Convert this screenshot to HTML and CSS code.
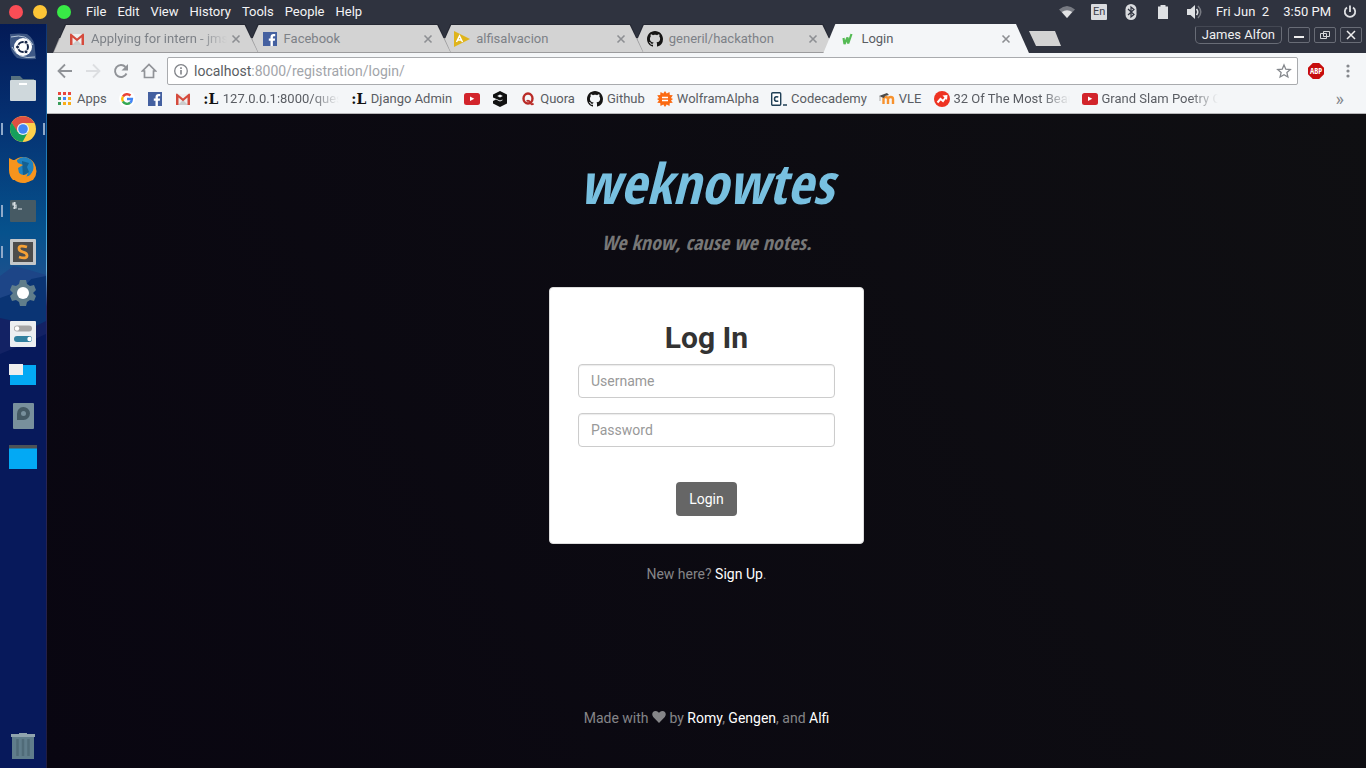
FILE: index.html
```html
<!DOCTYPE html>
<html lang="en">
<head>
<meta charset="utf-8">
<title>Login</title>
<link rel="stylesheet" href="styles.css">
</head>
<body>
<svg class="defs" width="0" height="0" aria-hidden="true">
  <symbol id="gmail" viewBox="0 0 16 16"><path fill="#eee" d="M1 3h14v11H1z"/><path fill="#ccc" d="M3 14l5-5 5 5z"/><path fill="#d54b3d" d="M1 14V3.500Q1 2.500 2 2.500L8 7.500l6-5q1 0 1 1V14h-2.500V6.500L8 10.300 3.500 6.500V14z"/></symbol>
  <symbol id="facebook" viewBox="0 0 16 16"><path fill="#4460a0" d="M1 1h14v14H1z"/><path fill="#fff" d="M8.500 15V9.700H6.800V7.500h1.700V6c0-2 1.200-3 3-3h1.700v2.200h-1.100c-.9 0-1.200.4-1.200 1.100v1.200h2.200l-.3 2.200h-1.900V15z"/></symbol>
  <symbol id="github" viewBox="0 0 16 16"><path fill="#161514" d="M8 0C3.580 0 0 3.580 0 8c0 3.540 2.290 6.530 5.470 7.590.4.070.55-.17.55-.38 0-.19-.01-.82-.01-1.490-2.010.37-2.530-.49-2.690-.94-.09-.23-.48-.94-.82-1.130-.28-.15-.68-.52-.01-.53.63-.01 1.080.58 1.230.82.72 1.210 1.870.87 2.330.66.070-.52.28-.87.51-1.070-1.780-.2-3.640-.89-3.640-3.950 0-.87.31-1.590.82-2.150-.08-.2-.36-1.020.08-2.120 0 0 .67-.21 2.200.82.64-.18 1.320-.27 2-.27s1.360.09 2 .27c1.530-1.040 2.200-.82 2.200-.82.44 1.100.16 1.920.08 2.120.51.56.82 1.270.82 2.150 0 3.070-1.870 3.750-3.650 3.950.29.25.54.73.54 1.480 0 1.070-.01 1.930-.01 2.200 0 .21.15.46.55.38A8 8 0 0016 8c0-4.420-3.580-8-8-8z"/></symbol>
  <symbol id="youtube" viewBox="0 0 16 16"><rect y="2" width="16" height="12" rx="2.500" fill="#d2242b"/><path fill="#fff" d="M6 5.500v4.600L10.300 7.800z"/></symbol>
  <symbol id="close" viewBox="0 0 10 10"><path d="M1.500 1.500l7 7M8.500 1.500l-7 7" stroke="#8d8f93" stroke-width="1.600" fill="none"/></symbol>
</svg>

<header class="menubar">
  <div class="lights">
    <button class="light red" aria-label="Close window"></button>
    <button class="light amber" aria-label="Minimise window"></button>
    <button class="light green" aria-label="Maximise window"></button>
  </div>
  <nav class="menus">
    <button>File</button><button>Edit</button><button>View</button><button>History</button><button>Tools</button><button>People</button><button>Help</button>
  </nav>
  <div class="status">
    <div class="indicators">
      <svg width="16" height="16" viewBox="0 0 16 16"><path fill="#777a82" d="M0 5.500Q8-1.500 16 5.500L8 14z"/><path fill="#e2e3e5" d="M2.800 8Q8 4.500 13.200 8L8 14z"/></svg>
      <span class="lang">En</span>
      <svg width="16" height="16" viewBox="0 0 16 16"><rect x="2.500" width="11" height="16" rx="5.500" fill="#dadcdf"/><path d="M5 5l6 5.500-3 2.500V3l3 2.500L5 11" fill="none" stroke="#2f333f" stroke-width="1.200"/></svg>
      <svg width="16" height="16" viewBox="0 0 16 16"><path fill="#dfe1e4" d="M3 2.500h2.500V1h5v1.500H13V15H3z"/></svg>
      <svg width="16" height="16" viewBox="0 0 16 16"><path fill="#dfe1e4" d="M0 5h3.500L8 1v14l-4.500-4H0z"/><path d="M9.500 5q2.500 3 0 6" fill="none" stroke="#dfe1e4" stroke-width="1.600"/><path d="M11 2q5.500 6 0 12" fill="none" stroke="#777a82" stroke-width="1.500"/></svg>
    </div>
    <span class="date">Fri Jun&nbsp; 2</span>
    <time>3:50 PM</time>
    <button class="power" aria-label="Power"><svg width="16" height="16" viewBox="0 0 16 16"><path d="M5 3.500a5.200 5.200 0 1 0 6 0M8 1.500V8" fill="none" stroke="#dfe1e4" stroke-width="1.800"/></svg></button>
  </div>
</header>

<div class="desktop">
  <nav class="launcher" aria-label="Launcher">
    <svg class="wallpaper" viewBox="0 0 47 744" preserveAspectRatio="none" aria-hidden="true">
      <defs><linearGradient id="sky" x2="0" y2="1"><stop stop-color="#031a56"/><stop offset=".12" stop-color="#052f70"/><stop offset=".28" stop-color="#06528d"/><stop offset=".36" stop-color="#23508d"/></linearGradient></defs>
      <path fill="url(#sky)" d="M0 0h47v744H0z"/>
      <path fill="#1d4587" d="M0 252l14-10 16 4 17 5v60H0z"/>
      <path fill="#0a3474" d="M0 274l20-7 12-12 15-3v60H0z"/>
      <path fill="#132264" d="M0 294l14 3 12 10 21-10v60H0z"/>
      <path fill="#07195b" d="M0 330l20-8 27-12v434H0z"/>
    </svg>
    <button class="app" aria-label="Search"><svg viewBox="0 0 28 28"><path fill="#7890ad" opacity=".5" d="M1 1q10-1 17 0 8 5 8 16l1 9q-12 1-19-1Q1 19 1 10z"/><path d="M2 4q16-4 22 8M26 24Q9 27 3 14" stroke="#b9c8d8" fill="none"/><circle cx="14" cy="14" r="9" fill="#fff"/><circle cx="14" cy="14" r="5" fill="none" stroke="#182748" stroke-width="2"/><g fill="#182748" stroke="#fff"><circle cx="8.500" cy="14" r="2"/><circle cx="17" cy="9.200" r="2"/><circle cx="17" cy="18.800" r="2"/></g></svg></button>
    <button class="app" aria-label="Files"><svg viewBox="0 0 28 28"><path fill="#57717f" d="M2 2h9l3 3h11v7H2z"/><rect x="1" y="6" width="26" height="21" rx="1" fill="#cfd8dc"/><path fill="#fff" d="M10 9h8v2h-8z"/></svg></button>
    <button class="app running focused" aria-label="Chrome"><svg viewBox="0 0 28 28"><circle cx="14" cy="14" r="13" fill="#fdd04c"/><path fill="#de4f42" d="M2.700 7.500A13 13 0 0 1 25.300 8H14l-6 9z"/><path fill="#169f5c" d="M2.700 7.500A13 13 0 0 0 13.500 27l5.700-10.500-10.500.5z"/><circle cx="14" cy="14" r="6" fill="#eef2f5"/><circle cx="14" cy="14" r="4.800" fill="#4285f4"/></svg></button>
    <button class="app" aria-label="Firefox"><svg viewBox="0 0 28 28"><circle cx="14" cy="14" r="13" fill="#f7941d"/><path fill="#1f83c2" d="M8 4q7-6 14 0 4 4 3 9l-4 7-8 1-4-5z"/><path fill="#146092" d="M13 5l7 2-2 4 2 5-6 4z"/><path fill="#f7941d" d="M0 2l4 2h3l2 3 5 2-5 3 1 5q5 4 9 0l-3 7H4Q0 20 0 14zM24 7q7 8 0 17l-9 3-3-4q15-3 12-16z"/></svg></button>
    <button class="app running" aria-label="Terminal"><svg viewBox="0 0 28 28"><rect x="1" y="3" width="26" height="22" rx="1" fill="#465a64"/><path d="M7 6H4v2h3v3H4M5.500 5v7M9 12h4" fill="none" stroke="#d6dde1" stroke-width="1.200"/></svg></button>
    <button class="app running" aria-label="Sublime Text"><svg viewBox="0 0 28 28"><rect x="1" y="1" width="26" height="26" rx="1" fill="#c4c7c9"/><path fill="#4c4c4c" d="M4 4h20v20H4z"/><path d="M18 9q-8-2.500-8 1.500 0 2.500 4 3.500t4 3.500q0 4-8 1.500" fill="none" stroke="#f5a136" stroke-width="2.800"/></svg></button>
    <button class="app" aria-label="Settings"><svg viewBox="0 0 28 28"><path fill="#607d8b" d="M11 1h6l1 4 3 2 4-1 2 5-3 3 3 3-2 5-4-1-3 2-1 4h-6l-1-4-3-2-4 1-2-5 3-3-3-3 2-5 4 1 3-2z"/><circle cx="14" cy="14" r="6" fill="#fff"/></svg></button>
    <button class="app" aria-label="Tweaks"><svg viewBox="0 0 28 28"><rect x="1" y="1" width="26" height="26" rx="1" fill="#eceff1"/><rect x="5" y="5.500" width="18" height="6" rx="3" fill="#a5a5a5"/><circle cx="8" cy="8.500" r="2.200" fill="#fff"/><rect x="5" y="16" width="18" height="6" rx="3" fill="#31809f"/><circle cx="20.500" cy="19" r="2.200" fill="#fff"/></svg></button>
    <button class="app" aria-label="Workspaces"><svg viewBox="0 0 28 28"><path fill="#03a9f4" d="M1 4h26v20H1z"/><path fill="#eee" d="M0 3h14v11H0z"/></svg></button>
    <button class="app" aria-label="Disk"><svg viewBox="0 0 28 28"><rect x="4" y="1" width="21" height="26" rx="1" fill="#78909c"/><path fill="#455a64" d="M8 18v-6a6.500 6.500 0 1 1 6.500 6z"/><circle cx="14.500" cy="11.500" r="2.500" fill="#78909c"/></svg></button>
    <button class="app" aria-label="Window"><svg viewBox="0 0 28 28"><path fill="#03a9f4" d="M0 3h28v23H0z"/><path fill="#4d5356" d="M0 2h28v3.500H0z"/></svg></button>
    <button class="app trash" aria-label="Trash"><svg viewBox="0 0 28 28"><path fill="#607d8b" d="M3 4h22v23H3z"/><path fill="#90a4ae" d="M2 2h8V1h8v1h8v3H2z"/><path d="M8.500 7v17M14 7v17M19.500 7v17" stroke="#506b78" stroke-width="2.500"/></svg></button>
  </nav>

  <div class="browser">
    <div class="tabstrip">
      <div class="tabs">
        <div class="tab t1"><svg class="ico"><use href="#gmail"/></svg><span class="label fade">Applying for intern - jms</span><button aria-label="Close tab"><svg><use href="#close"/></svg></button></div>
        <div class="tab t2"><svg class="ico"><use href="#facebook"/></svg><span class="label">Facebook</span><button aria-label="Close tab"><svg><use href="#close"/></svg></button></div>
        <div class="tab t3"><svg class="ico" viewBox="0 0 16 16"><path fill="#dfb41b" d="M0 0l16 8-16 8z"/><path d="M2.500 11L5.500 5l3 6M4 9h3" fill="none" stroke="#fff" stroke-width="1.500"/></svg><span class="label">alfisalvacion</span><button aria-label="Close tab"><svg><use href="#close"/></svg></button></div>
        <div class="tab t4"><svg class="ico"><use href="#github"/></svg><span class="label">generil/hackathon</span><button aria-label="Close tab"><svg><use href="#close"/></svg></button></div>
        <div class="tab active"><svg class="ico" viewBox="0 0 16 16"><path d="M4.500 7l1 6L8.500 6.500l.7 6L12.500 3" fill="none" stroke="#55bb55" stroke-width="2.200" stroke-linejoin="bevel"/></svg><span class="label">Login</span><button aria-label="Close tab"><svg><use href="#close"/></svg></button></div>
      </div>
      <button class="newtab" aria-label="New tab"></button>
      <div class="winctl">
        <button class="profile">James Alfon</button>
        <button class="wb" aria-label="Minimise"><svg viewBox="0 0 20 14"><path d="M5 9h10" stroke="#eee" stroke-width="2"/></svg></button>
        <button class="wb" aria-label="Restore"><svg viewBox="0 0 20 14"><path d="M8.500 3.500h6v5h-6zM5.500 5.500h6v5h-6z" fill="none" stroke="#d4d6da"/></svg></button>
        <button class="wb" aria-label="Close"><svg viewBox="0 0 20 14"><path d="M6 3l8 8M14 3l-8 8" stroke="#eee" stroke-width="1.500"/></svg></button>
      </div>
    </div>

    <div class="toolbar">
      <div class="navbtns">
        <button aria-label="Back"><svg viewBox="0 0 16 16"><path d="M15 8H2M8 1.500L1.500 8 8 14.500" fill="none" stroke="#909398" stroke-width="1.800"/></svg></button>
        <button aria-label="Forward"><svg viewBox="0 0 16 16"><path d="M1 8h13M8 1.500L14.500 8 8 14.500" fill="none" stroke="#dcdee1" stroke-width="1.800"/></svg></button>
        <button aria-label="Reload"><svg viewBox="0 0 16 16"><path d="M13.500 10.500A6 6 0 1 1 12.500 4" fill="none" stroke="#909398" stroke-width="1.900"/><path fill="#909398" d="M15 1v6.500H8.500z"/></svg></button>
        <button aria-label="Home"><svg viewBox="0 0 16 16"><path d="M3.500 8v6.500h9V8h2L8 1.500 1.500 8z" fill="none" stroke="#909398" stroke-width="1.700"/></svg></button>
      </div>
      <div class="omnibox">
        <svg class="ico" viewBox="0 0 16 16"><circle cx="8" cy="8" r="6.300" fill="none" stroke="#808388" stroke-width="1.300"/><path d="M8 7v4.500M8 4.300v1.600" stroke="#808388" stroke-width="1.600"/></svg>
        <span class="url"><b>localhost</b>:8000/registration/login/</span>
        <svg class="ico" viewBox="0 0 16 16"><path d="M8 2l1.800 4.200 4.500.4-3.400 3 1 4.400L8 11.700 4.100 14l1-4.400-3.400-3 4.500-.4z" fill="none" stroke="#84878c" stroke-width="1.300"/></svg>
      </div>
      <button class="abp" aria-label="Adblock Plus"><span>ABP</span></button>
      <button class="more" aria-label="Menu"><svg viewBox="0 0 16 16" fill="#85888d"><circle cx="8" cy="3" r="1.600"/><circle cx="8" cy="8" r="1.600"/><circle cx="8" cy="13" r="1.600"/></svg></button>
    </div>

    <nav class="bookmarks">
      <a href="#"><svg class="ico" viewBox="0 0 16 16"><path fill="#e8453c" d="M1 1h3v3H1zM6 1h3v3H6zM11 1h3v3h-3z"/><path fill="#3a9d5a" d="M1 6h3v3H1zM1 11h3v3H1z"/><path fill="#4285f4" d="M6 6h3v3H6z"/><path fill="#f9ad19" d="M11 6h3v3h-3zM6 11h3v3H6zM11 11h3v3h-3z"/></svg><span>Apps</span></a>
      <a href="#" aria-label="Google"><svg class="ico" viewBox="0 0 16 16"><circle cx="8" cy="8" r="8" fill="#fff"/><g fill="none" stroke-width="2.400"><path stroke="#ea4335" d="M4 5.500A5 5 0 0 1 11.500 4.500"/><path stroke="#fbbc05" d="M3.900 5.500a5 5 0 0 0 0 5"/><path stroke="#34a853" d="M3.900 10.500a5 5 0 0 0 7.300 1.300"/><path stroke="#4285f4" d="M11.200 11.800Q12.800 10.500 12.900 8H8"/></g></svg></a>
      <a href="#" aria-label="Facebook"><svg class="ico"><use href="#facebook"/></svg></a>
      <a href="#" aria-label="Gmail"><svg class="ico"><use href="#gmail"/></svg></a>
      <a href="#"><i class="dotl" aria-hidden="true">:L</i><span class="fade">127.0.0.1:8000/ques</span></a>
      <a href="#"><i class="dotl" aria-hidden="true">:L</i><span>Django Admin</span></a>
      <a href="#" aria-label="YouTube"><svg class="ico"><use href="#youtube"/></svg></a>
      <a href="#" aria-label="9GAG"><svg class="ico" viewBox="0 0 16 16"><path fill="#111" fill-rule="evenodd" d="M8 0l7 3.500v9L8 16l-7-3.500V10l3-1.500 4 2 2.500-1.200v-.8L8 9.500 1 6.500v-3zM8 3.500L5.200 5 8 6.500 10.800 5z"/></svg></a>
      <a href="#"><svg class="ico" viewBox="0 0 16 16"><ellipse cx="8" cy="7.500" rx="4.500" ry="5" fill="none" stroke="#b92b27" stroke-width="2.400"/><path d="M6.500 10q3-1 4 2 1 2.500 3 .5" fill="none" stroke="#b92b27" stroke-width="1.800"/></svg><span>Quora</span></a>
      <a href="#"><svg class="ico"><use href="#github"/></svg><span>Github</span></a>
      <a href="#"><svg class="ico" viewBox="0 0 16 16"><path fill="#fb6a12" d="M8 0l1.700 2.500L12.500 1l.3 3 3 .2L14 7l2 1-2 1.500 1.800 2.300-3 .2-.3 3-2.800-1.500L8 16l-1.700-2.500L3.500 15l-.3-3-3-.2L2 9.500 0 8l2-1L.2 4.200l3-.2.3-3 2.800 1.500z"/><path d="M5 6.500h6M5 9.500h6" stroke="#fff" stroke-width="1.500"/></svg><span>WolframAlpha</span></a>
      <a href="#"><svg class="ico" viewBox="0 0 16 16"><rect x=".7" y="1.700" width="9" height="12.600" rx="1" fill="#fff" stroke="#204056" stroke-width="1.400"/><path d="M7.300 6Q3.500 5 3.500 8t3.800 2M12 14h4" fill="none" stroke="#204056" stroke-width="1.600"/></svg><span>Codecademy</span></a>
      <a href="#"><svg class="ico" viewBox="0 0 16 16"><path d="M4.500 13V8q0-2 2-2t2.500 2v5M9 8q.5-2 2.700-2t2.300 2v5" fill="none" stroke="#f7922e" stroke-width="2.400"/><path fill="#4b4b4b" d="M0 5l8-3 2 2-4 1-1 2-3-1z"/><path d="M1 5v5" stroke="#aaa"/></svg><span>VLE</span></a>
      <a href="#"><svg class="ico" viewBox="0 0 16 16"><circle cx="8" cy="8" r="8" fill="#ee3322"/><path d="M3.500 11.500l3-3.500 2.500 2L12 6" fill="none" stroke="#fff" stroke-width="2"/><path fill="#fff" d="M8.500 4.500l5-.5-.5 5z"/></svg><span class="fade">32 Of The Most Beau</span></a>
      <a href="#"><svg class="ico"><use href="#youtube"/></svg><span class="fade">Grand Slam Poetry C</span></a>
      <button class="overflow" aria-label="More bookmarks">»</button>
    </nav>

    <main class="page">
      <h1>weknowtes</h1>
      <p class="tagline">We know, cause we notes.</p>
      <form class="card">
        <h2>Log In</h2>
        <input type="text" placeholder="Username" aria-label="Username">
        <input type="password" placeholder="Password" aria-label="Password">
        <button type="button">Login</button>
      </form>
      <p class="signup">New here? <a href="#">Sign Up</a>.</p>
      <footer>Made with <svg width="14" height="14" viewBox="0 0 14 14" role="img" aria-label="love"><path fill="#858588" d="M7 13L1.200 7C-.8 4.500.5 1 3.500 1 5.500 1 6.500 2.200 7 3c.5-.8 1.500-2 3.500-2 3 0 4.300 3.500 2.300 6z"/></svg> by <a href="#">Romy</a>, <a href="#">Gengen</a>, and <a href="#">Alfi</a></footer>
    </main>
  </div>
</div>
</body>
</html>
```

FILE: styles.css
```css
* { box-sizing: border-box; }

body {
  margin: 0;
  min-height: 100vh;
  display: flex;
  flex-direction: column;
  font: 13px/20px Roboto, sans-serif;
  background: #2f333f;
}

button {
  padding: 0;
  border: 0;
  background: none;
  font: inherit;
  color: inherit;
}

a { text-decoration: none; color: inherit; }
svg { flex: none; }
.defs { position: absolute; }
.ico { width: 16px; height: 16px; }

/* System menu bar */
.menubar {
  display: flex;
  align-items: center;
  height: 24px;
  padding: 0 8px 0 9px;
  background: #2f333f;
  color: #f4f4f5;
}
.lights { display: flex; gap: 10px; padding-right: 15px; }
.light { width: 14px; height: 14px; border-radius: 50%; }
.red { background: #fa4d56; }
.amber { background: #fdc536; }
.green { background: #38ea46; }
.menus { display: flex; gap: 11px; }
.status { display: flex; align-items: center; margin-left: auto; }
.indicators { display: flex; gap: 16px; align-items: center; margin-right: 13px; }
.lang {
  width: 16px;
  height: 16px;
  border-radius: 1px;
  background: #dadcdf;
  color: #3c404b;
  font-size: 11px;
  line-height: 16px;
  text-align: center;
}
.date { margin-right: 14px; }
time { margin-right: 11px; }
.power { display: flex; }

.desktop { flex: 1; display: flex; }

/* Launcher */
.launcher {
  position: relative;
  display: flex;
  flex-direction: column;
  width: 47px;
  flex: none;
  padding: 2px 0;
  border-right: 1px solid #2b2a62;
  border-image: linear-gradient(#10336f, #2a9bd6 25%, #6fb4dc 33%, #2b2a62 38%, #201c40) 1;
}
.wallpaper { position: absolute; inset: 0; width: 100%; height: 100%; }
.app {
  position: relative;
  display: flex;
  align-items: center;
  justify-content: center;
  height: 41px;
}
.app svg { width: 28px; height: 28px; }
.trash { margin-top: auto; }
.running::before, .focused::after {
  content: "";
  position: absolute;
  left: 1px;
  top: 15px;
  width: 2px;
  height: 12px;
  background: #8fa9c9;
}
.focused::after { left: auto; right: 1px; }

/* Browser window */
.browser { flex: 1; min-width: 0; display: flex; flex-direction: column; }
.tabstrip { display: flex; height: 29px; padding: 0 4px 0 6px; }
.tabs { display: flex; flex: 0 1 976px; min-width: 0; }
.tab {
  position: relative;
  isolation: isolate;
  flex: 1 1 206px;
  min-width: 0;
  display: flex;
  align-items: center;
  padding: 0 18px 0 16px;
  background: linear-gradient(#252833 50%, #9b9b9d 50%);
  color: #7d8187;
  clip-path: polygon(12px 0, calc(100% - 13px) 0, 100% 100%, 0 100%);
}
.tab::before {
  content: "";
  position: absolute;
  z-index: -1;
  inset: 1px 1px;
  background: #d3d3d3;
  clip-path: polygon(12px 0, calc(100% - 13px) 0, 100% 100%, 0 100%);
}
.tab + .tab { margin-left: -13px; }
.t1 { z-index: 4; }
.t2 { z-index: 3; }
.t3 { z-index: 2; }
.t4 { z-index: 1; }
.active { z-index: 5; background: #f4f6f8; color: #5a5d63; }
.active::before { background: #f4f6f8; }
.label { flex: 1; min-width: 0; margin: 0 4px 0 6px; white-space: nowrap; }
.tab button { display: flex; }
.tab button svg { width: 10px; height: 10px; }
.fade {
  -webkit-mask-image: linear-gradient(to right, #000 calc(100% - 28px), transparent);
  mask-image: linear-gradient(to right, #000 calc(100% - 28px), transparent);
}
.newtab {
  align-self: center;
  width: 32px;
  height: 15px;
  background: #d3d3d3;
  clip-path: polygon(0 0, 26px 0, 100% 100%, 7px 100%);
}
.winctl { display: flex; gap: 4px; margin-left: auto; padding-top: 2px; color: #eeeff0; }
.profile {
  height: 18px;
  margin-right: 2px;
  padding: 0 6px;
  border: 1px solid #686c76;
  border-top-color: #444853;
  border-radius: 2px 2px 5px 5px;
  line-height: 16px;
  white-space: nowrap;
}
.wb {
  display: flex;
  width: 22px;
  height: 16px;
  margin-top: 1px;
  border: 1px solid #686c76;
  border-radius: 2px;
}
.wb svg { width: 20px; height: 14px; }

.toolbar {
  display: flex;
  align-items: center;
  height: 36px;
  padding: 0 10px;
  background: #f4f6f8;
}
.navbtns { display: flex; gap: 12px; margin-right: 10px; }
.navbtns svg, .more svg { display: block; width: 16px; height: 16px; }
.omnibox {
  flex: 1;
  min-width: 0;
  display: flex;
  align-items: center;
  height: 28px;
  padding: 0 5px;
  border: 1px solid #a9abae;
  border-radius: 2px;
  background: #fff;
}
.url { flex: 1; min-width: 0; margin-left: 5px; white-space: nowrap; font-size: 14px; color: #a2a5aa; }
.url b { font-weight: 400; color: #5a5d63; }
.abp {
  display: flex;
  justify-content: center;
  width: 16px;
  height: 16px;
  margin: 0 16px 0 10px;
  background: #c70d0d;
  clip-path: polygon(30% 0, 70% 0, 100% 30%, 100% 70%, 70% 100%, 30% 100%, 0 70%, 0 30%);
  color: #fff;
  font: bold 8px/16px "Open Sans Condensed", "Liberation Sans Narrow", sans-serif;
}

.bookmarks {
  display: flex;
  gap: 12px;
  height: 25px;
  padding: 0 22px 4px 10px;
  border-bottom: 1px solid #b6b6b8;
  background: #f4f6f8;
  color: #5a5d63;
}
.bookmarks a { display: flex; align-items: center; gap: 4px; }
.bookmarks span { white-space: nowrap; }
.bookmarks .fade { width: 116px; }
.dotl {
  width: 16px;
  color: #111;
  font: bold 14px/16px "DejaVu Serif", serif;
  text-align: center;
}
.overflow { margin-left: auto; font-size: 18px; line-height: 18px; color: #85888d; }

/* Login page */
.page {
  flex: 1;
  display: flex;
  flex-direction: column;
  align-items: center;
  padding: 34px 16px 40px;
  background: linear-gradient(60deg, #090611, #0f0f12);
  color: #858588;
  font-size: 14px;
}
h1, .tagline {
  margin: 0;
  font-family: "Open Sans Condensed", "Liberation Sans Narrow", "Liberation Sans", sans-serif;
  font-style: italic;
  font-weight: 700;
}
h1 { font-size: 56px; line-height: 68px; color: #78c0e0; }
.tagline { margin-top: 14px; font-size: 20px; line-height: 26px; color: #777; }
.card {
  display: flex;
  flex-direction: column;
  align-items: center;
  width: 100%;
  max-width: 315px;
  margin-top: 31px;
  padding: 33px 28px 27px;
  border: 1px solid #ddd;
  border-radius: 4px;
  background: #fff;
}
h2 { margin: 0 0 10px; font-size: 30px; line-height: 33px; font-weight: 700; color: #333; }
.card input {
  width: 100%;
  height: 34px;
  margin: 0 0 15px;
  padding: 6px 12px;
  border: 1px solid #ccc;
  border-radius: 4px;
  background: #fff;
  box-shadow: inset 0 1px 1px rgba(0, 0, 0, .08);
  font: 14px/20px Roboto, sans-serif;
  color: #555;
}
.card input::placeholder { color: #999; }
.card button {
  height: 34px;
  margin-top: 20px;
  padding: 0 13px;
  border-radius: 4px;
  background: #666;
  color: #fff;
}
.signup { margin: 20px 0; }
.page a { color: #fff; }
footer { margin-top: auto; text-align: center; }
footer svg { vertical-align: -1px; }
```
